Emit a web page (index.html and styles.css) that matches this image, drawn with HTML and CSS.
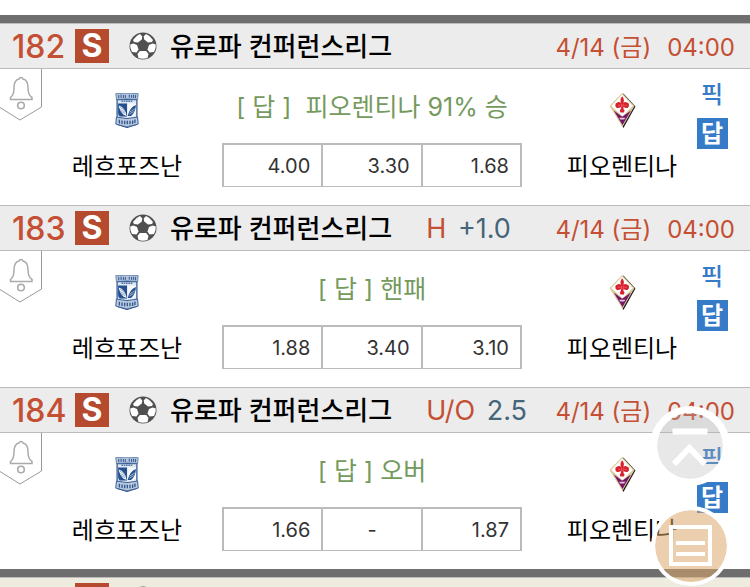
FILE: index.html
```html
<!DOCTYPE html>
<html lang="ko">
<head>
    <meta charset="UTF-8">
    <meta name="viewport" content="width=device-width, initial-scale=1.0">
    <title>유로파 컨퍼런스리그</title>
    <link rel="stylesheet" href="styles.css">
</head>
<body>
    <!-- shared icons -->
    <svg class="defs" width="0" height="0">
        <symbol id="ball" viewBox="0 0 28 28">
            <circle cx="14" cy="14" r="13.5" fill="#505050"/>
            <g fill="#fff">
                <path d="M4 8 Q7 3.500 11 2 L13.300 4.500 L12.800 7.500 L9 10.500 L5 10 Z"/>
                <path d="M24 8 Q21 3.500 17 2 L14.700 4.500 L15.200 7.500 L19 10.500 L23 10 Z"/>
                <path d="M1.200 12.500 L4.500 11.500 L8 13 L9.500 17.500 L7.500 20.500 L3 20 Q0.800 16 1.200 12.500 Z"/>
                <path d="M26.800 12.500 L23.500 11.500 L20 13 L18.500 17.500 L20.500 20.500 L25 20 Q27.200 16 26.800 12.500 Z"/>
                <path d="M10.800 19 H17.200 L19.500 22 L18.500 26 Q14 27.600 9.500 26 L8.500 22 Z"/>
            </g>
        </symbol>
        <symbol id="bell" viewBox="0 0 42 52">
            <path d="M41.5 0 V38 L20 51 L0 38.5" fill="#fff" stroke="#999"/>
            <path d="M10.500 30.500 V28.500 Q14 26 14 19 Q14 11 19 10 Q19.500 8.500 21 8.500 Q22.500 8.500 23 10 Q28 11 28 19 Q28 26 32 28.500 V30.500 Z" fill="none" stroke="#aaa" stroke-width="1.500"/>
            <circle cx="21" cy="36.500" r="3.300" fill="none" stroke="#aaa" stroke-width="1.600"/>
        </symbol>
        <symbol id="lech" viewBox="0 0 68 106">
            <path d="M4 20 H64 V88 L34 98 L4 88 Z" fill="#dfe8f2" stroke="#3a5f98" stroke-width="4"/>
            <path d="M0 2 Q34 -2 68 2 L66 20 Q34 16 2 20 Z" fill="#b4c5db" stroke="#3a5f98" stroke-width="2"/>
            <path d="M9 6 V16 M16 5 V15 M23 6 V15 M29 6 V15 M41 5 V14 M48 6 V15 M54 5 V15 M60 6 V16" stroke="#31558f" stroke-width="3"/>
            <path d="M17 25 H50" stroke="#557bab" stroke-width="5" stroke-dasharray="5 2"/>
            <path d="M7 32 H34 V71 H12 Q7 68 7 60 Z" fill="#24508f"/>
            <path d="M36 32 H61 V65 L54 71 H36 Z" fill="#f7f9fb"/>
            <path d="M9 38 Q28 43 33 70 L24 66 Q12 56 9 38 Z" fill="#fff"/>
            <path d="M14 50 L28 58 M16 56 L29 63 M13 43 L27 52" stroke="#5e82b2" stroke-width="2"/>
            <path d="M61 36 Q42 43 36 70 L46 70 Q60 58 61 36 Z" fill="#24508f"/>
            <path d="M58 48 L42 58 M54 56 L41 64" stroke="#e4edf5" stroke-width="2"/>
            <path d="M2 73 Q34 82 66 73 L68 94 L34 105 L0 94 Z" fill="#b9c9de" stroke="#3a5f98" stroke-width="3"/>
            <path d="M11 81 V92 M19 83 V94 M27 84 V95 M35 84 V95 M43 84 V95 M51 83 V94 M58 80 V91" stroke="#31558f" stroke-width="4"/>
            <path d="M5 96 L34 102 L63 96" stroke="#31558f" stroke-width="2" fill="none"/>
        </symbol>
        <symbol id="viola" viewBox="0 0 80 108">
            <path d="M42 1 L80 42 L43 108 L38 100 Z" fill="#221a20"/>
            <path d="M39 0 L77 40 L40 105 L0 40 Z" fill="#d8ca96"/>
            <path d="M39 5 L72 40 L40 72 L5 40 Z" fill="#fff"/>
            <path d="M13 54 L39 73 L66 54 L40 99 Z" fill="#751568"/>
            <path d="M30 76 H49 L45 82 H33 Z" fill="#e5c9df"/>
            <path d="M39 10 Q47 18 43 30 Q49 25 55 30 Q61 31 60 37 Q61 44 55 46 Q49 47 43 43 V50 Q49 52 44 60 H34 Q29 52 35 50 V43 Q28 48 23 46 Q17 44 18 37 Q17 31 23 30 Q29 25 35 30 Q31 18 39 10 Z" fill="#d9202d"/>
            <path d="M37 33 V44 M42 33 V44 M26 38 H33 M46 38 H53" stroke="#f17b80" stroke-width="2"/>
        </symbol>
    </svg>

    <main class="page">
        <section class="group">
            <article class="match">
                <header class="match-head">
                    <span class="no">182</span><span class="sport">S</span>
                    <svg class="ball"><use href="#ball"/></svg>
                    <h2 class="league">유로파 컨퍼런스리그</h2>
                    <div class="date"><span>4/14 (금)</span><span>04:00</span></div>
                </header>
                <div class="match-body">
                    <button class="alarm" type="button" aria-label="알림"><svg><use href="#bell"/></svg></button>
                    <div class="team"><svg class="lech"><use href="#lech"/></svg><span>레흐포즈난</span></div>
                    <div class="center">
                        <p class="answer">[ 답 ]&nbsp; 피오렌티나 91% 승</p>
                        <table class="odds"><tr><td>4.00</td><td>3.30</td><td>1.68</td></tr></table>
                    </div>
                    <div class="team"><svg class="viola"><use href="#viola"/></svg><span>피오렌티나</span></div>
                    <div class="actions"><button class="pick" type="button">픽</button><button class="reply" type="button">답</button></div>
                </div>
            </article>

            <article class="match">
                <header class="match-head">
                    <span class="no">183</span><span class="sport">S</span>
                    <svg class="ball"><use href="#ball"/></svg>
                    <h2 class="league">유로파 컨퍼런스리그</h2>
                    <div class="rule">H <b>+1.0</b></div>
                    <div class="date"><span>4/14 (금)</span><span>04:00</span></div>
                </header>
                <div class="match-body">
                    <button class="alarm" type="button" aria-label="알림"><svg><use href="#bell"/></svg></button>
                    <div class="team"><svg class="lech"><use href="#lech"/></svg><span>레흐포즈난</span></div>
                    <div class="center">
                        <p class="answer">[ 답 ] 핸패</p>
                        <table class="odds"><tr><td>1.88</td><td>3.40</td><td>3.10</td></tr></table>
                    </div>
                    <div class="team"><svg class="viola"><use href="#viola"/></svg><span>피오렌티나</span></div>
                    <div class="actions"><button class="pick" type="button">픽</button><button class="reply" type="button">답</button></div>
                </div>
            </article>

            <article class="match">
                <header class="match-head">
                    <span class="no">184</span><span class="sport">S</span>
                    <svg class="ball"><use href="#ball"/></svg>
                    <h2 class="league">유로파 컨퍼런스리그</h2>
                    <div class="rule">U/O <b>2.5</b></div>
                    <div class="date"><span>4/14 (금)</span><span>04:00</span></div>
                </header>
                <div class="match-body">
                    <button class="alarm" type="button" aria-label="알림"><svg><use href="#bell"/></svg></button>
                    <div class="team"><svg class="lech"><use href="#lech"/></svg><span>레흐포즈난</span></div>
                    <div class="center">
                        <p class="answer">[ 답 ] 오버</p>
                        <table class="odds"><tr><td>1.66</td><td class="none">-</td><td>1.87</td></tr></table>
                    </div>
                    <div class="team"><svg class="viola"><use href="#viola"/></svg><span>피오렌티나</span></div>
                    <div class="actions"><button class="pick" type="button">픽</button><button class="reply" type="button">답</button></div>
                </div>
            </article>
        </section>

        <section class="group">
            <header class="match-head cream">
                <span class="no"></span><span class="sport"></span>
                <svg class="ball"><use href="#ball"/></svg>
            </header>
        </section>
    </main>

    <button class="float to-top" type="button" aria-label="맨 위로">
        <svg viewBox="0 0 66 66"><path d="M15.500 18.500 H50.500" stroke-width="6"/><path d="M17 51 L32.500 35 L48 51" stroke-width="6"/></svg>
    </button>
    <button class="float list" type="button" aria-label="목록">
        <svg viewBox="0 0 72 72"><rect x="16" y="17" width="39" height="37" stroke-width="4"/><path d="M21 33 H50 M21 44 H50" stroke-width="4"/></svg>
    </button>
</body>
</html>
```
FILE: styles.css
```css
* {
    box-sizing: border-box;
}

body {
    margin: 0;
    background: #fff;
    color: #000;
    font-family: Inter, "Noto Sans CJK KR", sans-serif;
    font-size: 24px;
}

button {
    padding: 0;
    border: none;
    background: none;
    font-family: inherit;
    cursor: pointer;
}

svg {
    display: block;
}

.defs {
    position: absolute;
}

.page {
    height: 100vh;
    padding-top: 15px;
    overflow: hidden;
}

.group {
    border-top: 8px solid #6e6e6e;
}

/* header row */
.match-head {
    display: flex;
    align-items: center;
    height: 46px;
    padding: 0 15px 0 12px;
    background: #ececec;
    border-top: 1px solid #bbb;
    border-bottom: 1px solid #bbb;
    white-space: nowrap;
}

.match-head.cream {
    background: #eeebdf;
}

.no {
    width: 63px;
    color: #c44f33;
    font-size: 32px;
    font-weight: 500;
}

.sport {
    width: 34px;
    height: 34px;
    background: #b54a2e;
    color: #fff;
    font-size: 32px;
    font-weight: 700;
    line-height: 34px;
    text-align: center;
}

.ball {
    width: 28px;
    height: 28px;
    margin: 0 13px 0 20px;
}

.league {
    margin: 0;
    padding-bottom: 4px;
    font-size: 26px;
    font-weight: 500;
}

.rule {
    margin-left: 34px;
    color: #c44f33;
    font-size: 27px;
}

.rule b {
    margin-left: 4px;
    color: #44657a;
    font-weight: 400;
}

.date {
    display: flex;
    align-items: baseline;
    gap: 16px;
    margin-left: auto;
    padding-bottom: 2px;
    color: #c44f33;
}

/* match row */
.match-body {
    display: grid;
    grid-template-columns: 42px 170fr 350fr 120fr 60px;
    height: 136px;
    padding-right: 8px;
}

.alarm {
    align-self: start;
}

.alarm svg {
    width: 42px;
    height: 52px;
}

.team {
    display: flex;
    flex-direction: column;
    align-items: center;
    gap: 18px;
    padding-top: 24px;
    line-height: 40px;
    white-space: nowrap;
}

.lech {
    width: 24px;
    height: 35px;
}

.viola {
    width: 27px;
    height: 35px;
}

.team span {
    padding-top: 1px;
}

.center {
    padding: 19px 40px 0 10px;
}

.answer {
    margin: 0 0 17px;
    color: #759a5d;
    font-size: 25px;
    line-height: 38px;
    text-align: center;
    white-space: nowrap;
}

.odds {
    width: 100%;
    height: 44px;
    border-collapse: collapse;
    table-layout: fixed;
    color: #333;
    font-size: 20px;
}

.odds td {
    padding: 0 11px;
    border: 2px solid #bbb;
    border-bottom-width: 1px;
    text-align: right;
}

.odds .none {
    text-align: center;
}

.actions {
    display: flex;
    flex-direction: column;
    align-items: center;
    gap: 8px;
    padding-top: 10px;
}

.pick,
.reply {
    width: 31px;
    height: 31px;
    color: #367bc8;
    font-size: 24px;
    font-weight: 500;
    line-height: 31px;
}

.reply {
    background: #367bc8;
    color: #fff;
    font-weight: 700;
}

/* floating buttons */
.float {
    position: fixed;
    width: 80px;
    height: 80px;
    border-radius: 50%;
    background-clip: padding-box;
}

.float svg {
    width: 100%;
    height: 100%;
    fill: none;
    stroke: #fff;
}

.to-top {
    right: 20px;
    bottom: 101px;
    border: 7px solid #fff;
    background-color: rgba(180, 180, 180, 0.3);
}

.list {
    right: 19px;
    bottom: 1px;
    border: 4px solid #fff;
    background-color: rgba(220, 167, 105, 0.54);
}
```
